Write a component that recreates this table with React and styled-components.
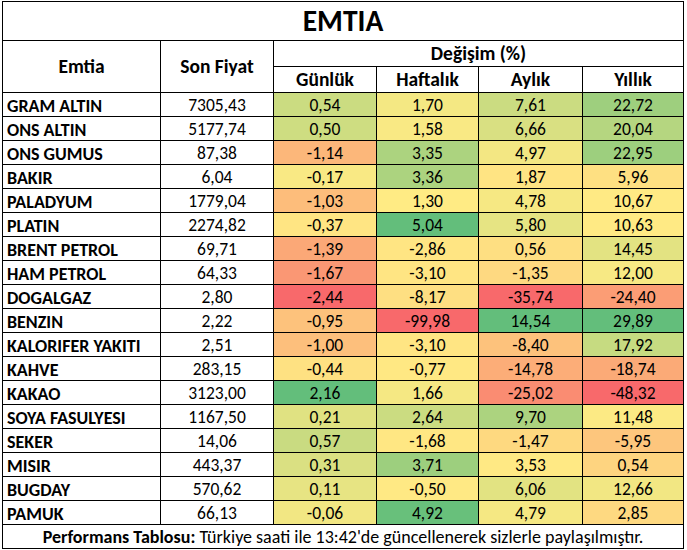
import React from 'react';
import styled, {createGlobalStyle} from 'styled-components';

const GlobalStyle = createGlobalStyle`
  html, body {
    margin: 0;
    padding: 0;
    background: #ffffff;
  }
  body {
    font-family: Carlito, Lato, "Liberation Sans", sans-serif;
    color: #000;
  }
`

// veriler
const rows = [
  ["GRAM ALTIN", "7305,43", 0.54, 1.70, 7.61, 22.72],
  ["ONS ALTIN", "5177,74", 0.50, 1.58, 6.66, 20.04],
  ["ONS GUMUS", "87,38", -1.14, 3.35, 4.97, 22.95],
  ["BAKIR", "6,04", -0.17, 3.36, 1.87, 5.96],
  ["PALADYUM", "1779,04", -1.03, 1.30, 4.78, 10.67],
  ["PLATIN", "2274,82", -0.37, 5.04, 5.80, 10.63],
  ["BRENT PETROL", "69,71", -1.39, -2.86, 0.56, 14.45],
  ["HAM PETROL", "64,33", -1.67, -3.10, -1.35, 12.00],
  ["DOGALGAZ", "2,80", -2.44, -8.17, -35.74, -24.40],
  ["BENZIN", "2,22", -0.95, -99.98, 14.54, 29.89],
  ["KALORIFER YAKITI", "2,51", -1.00, -3.10, -8.40, 17.92],
  ["KAHVE", "283,15", -0.44, -0.77, -14.78, -18.74],
  ["KAKAO", "3123,00", 2.16, 1.66, -25.02, -48.32],
  ["SOYA FASULYESI", "1167,50", 0.21, 2.64, 9.70, 11.48],
  ["SEKER", "14,06", 0.57, -1.68, -1.47, -5.95],
  ["MISIR", "443,37", 0.31, 3.71, 3.53, 0.54],
  ["BUGDAY", "570,62", 0.11, -0.50, 6.06, 12.66],
  ["PAMUK", "66,13", -0.06, 4.92, 4.79, 2.85],
];

const RED = [248, 105, 107];
const YELLOW = [255, 235, 132];
const GREEN = [99, 190, 123];

const median = (arr) => {
  const s = [...arr].sort((a, b) => a - b);
  const m = s.length / 2;
  return s.length % 2 ? s[Math.floor(m)] : (s[m - 1] + s[m]) / 2;
}

const mix = (a, b, t) => a.map((v, i) => Math.round(v + (b[i] - v) * t));

// excel 3 renk skalası gibi
const scaleFor = (values) => {
  const min = Math.min(...values);
  const max = Math.max(...values);
  const mid = median(values);
  return (v) => {
    let c;
    if (v <= mid) {
      c = mix(RED, YELLOW, mid === min ? 1 : (v - min) / (mid - min));
    } else {
      c = mix(YELLOW, GREEN, max === mid ? 0 : (v - mid) / (max - mid));
    }
    return `rgb(${c[0]}, ${c[1]}, ${c[2]})`;
  }
}

const scales = [2, 3, 4, 5].map((i) => scaleFor(rows.map((r) => r[i])));

const fmt = (n) => n.toFixed(2).replace('.', ',');

const App = () => {
  return (
    <>
      <GlobalStyle />
      <Page>
        <Sheet>
          <Title>EMTIA</Title>
          <HeadCell $rows={2}>Emtia</HeadCell>
          <HeadCell $rows={2}>Son Fiyat</HeadCell>
          <HeadCell $cols={4}>Değişim (%)</HeadCell>
          <HeadCell>Günlük</HeadCell>
          <HeadCell>Haftalık</HeadCell>
          <HeadCell>Aylık</HeadCell>
          <HeadCell>Yıllık</HeadCell>
          {rows.map((r) => (
            <React.Fragment key={r[0]}>
              <NameCell>{r[0]}</NameCell>
              <ValueCell>{r[1]}</ValueCell>
              {[2, 3, 4, 5].map((i) => (
                <ValueCell key={i} $bg={scales[i - 2](r[i])}>{fmt(r[i])}</ValueCell>
              ))}
            </React.Fragment>
          ))}
          <Footer>
            <b>Performans Tablosu:</b>&nbsp;Türkiye saati ile 13:42'de güncellenerek sizlerle paylaşılmıştır.
          </Footer>
        </Sheet>
      </Page>
    </>
  );
};

export default App;

const Page = styled.div`
  padding: 1px 0 0 2px;
`

const Sheet = styled.div`
  display: grid;
  width: max-content;
  grid-template-columns: 157px 112px 102px 101px 103px 100px;
  grid-template-rows: 38px 25px 25px repeat(18, 23px) 23px;
  gap: 1px;
  padding: 1px;
  background: #000;
`

const Cell = styled.div`
  display: flex;
  align-items: center;
  justify-content: center;
  background: #fff;
  white-space: nowrap;
  line-height: 1;
`

const Title = styled(Cell)`
  grid-column: span 6;
  font-size: 29.5px;
  font-weight: 700;
  padding-top: 2px;
`

const HeadCell = styled(Cell)`
  grid-column: span ${(p) => p.$cols || 1};
  grid-row: span ${(p) => p.$rows || 1};
  font-size: 19.5px;
  font-weight: 700;
  padding-top: 1px;
`

const NameCell = styled(Cell)`
  justify-content: flex-start;
  padding: 2px 0 0 4px;
  font-size: 18px;
  font-weight: 700;
`

const ValueCell = styled(Cell)`
  background: ${(p) => p.$bg || '#fff'};
  font-size: 17.5px;
  padding-top: 2px;
`

const Footer = styled(Cell)`
  grid-column: span 6;
  font-size: 18px;
  padding-top: 1px;
`
